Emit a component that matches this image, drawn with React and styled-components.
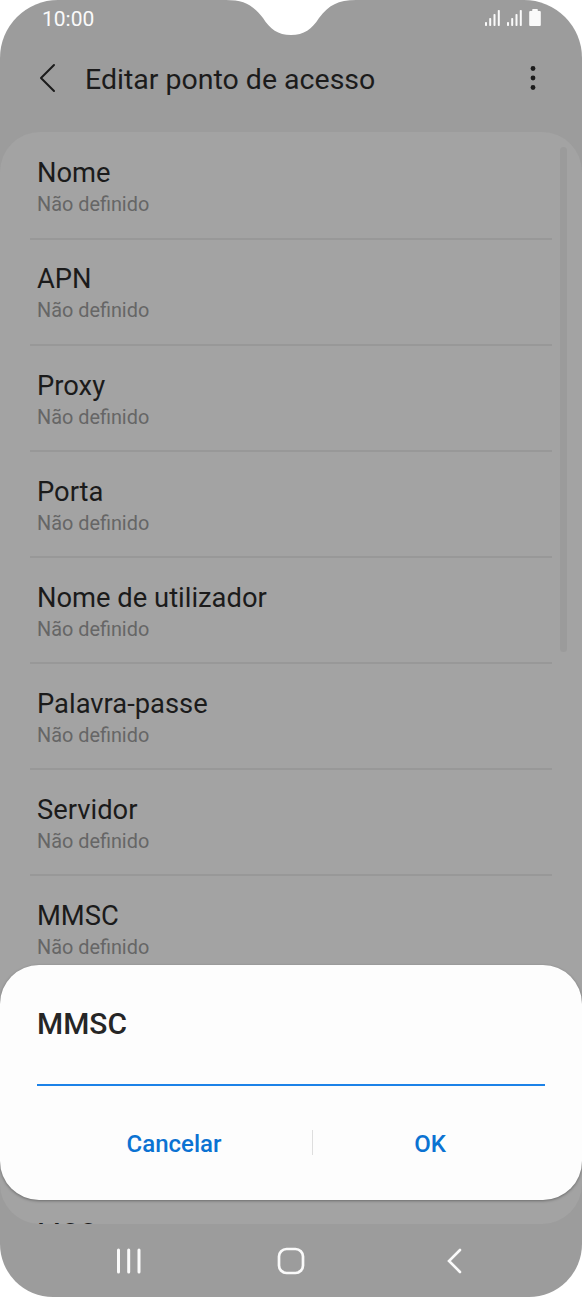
import React from 'react';
import styled, { createGlobalStyle } from 'styled-components';

const GlobalStyle = createGlobalStyle`
    * {
        box-sizing: border-box;
    }
    body {
        margin: 0;
        background: #fff;
        font-family: Roboto, "Liberation Sans", sans-serif;
    }
`;

const Phone = styled.div`
    position: relative;
    display: flex;
    flex-direction: column;
    width: 582px;
    height: 1297px;
    overflow: hidden;
    background: #9c9c9c;
    border-radius: 58px 58px 53px 53px;
`;

const Notch = styled.svg`
    position: absolute;
    top: 0;
    left: 226px;
`;

const StatusBar = styled.div`
    display: flex;
    flex: none;
    justify-content: space-between;
    height: 36px;
    padding: 0 41px 0 42px;
    color: #fafafa;
`;

const Clock = styled.span`
    font-size: 21px;
    line-height: 38px;
`;

const StatusIcons = styled.div`
    display: flex;
    gap: 7px;
    padding-top: 9px;
`;

const Header = styled.header`
    display: flex;
    flex: none;
    align-items: center;
    height: 96px;
    padding: 0 44px 12px 38px;
`;

const Title = styled.h1`
    flex: 1;
    margin: 3px 0 0 29px;
    font-size: 28.5px;
    font-weight: 400;
    line-height: 36px;
    color: #1b1b1b;
    white-space: nowrap;
`;

const Panel = styled.main`
    display: flex;
    flex: none;
    justify-content: space-between;
    height: 1092px;
    padding: 0 15px 0 30px;
    overflow: hidden;
    background: #a3a3a3;
    border-radius: 40px;
`;

const List = styled.ul`
    width: 522px;
    margin: 1.8px 0 0;
    padding: 0;
    list-style: none;
`;

const Item = styled.li`
    height: 106.07px;
    margin-top: ${props => props.$gap || 0}px;
    padding: 21.6px 7px 0;
    border-bottom: 2px solid #989898;
`;

const Label = styled.div`
    font-size: 27.35px;
    line-height: 37px;
    color: #1b1b1b;
`;

const Value = styled.div`
    font-size: 19.85px;
    line-height: 26px;
    color: #666;
`;

const ScrollThumb = styled.div`
    width: 7px;
    height: 505px;
    margin-top: 15px;
    border-radius: 4px;
    background: #9b9b9b;
`;

const NavBar = styled.nav`
    display: flex;
    flex: 1;
    align-items: center;
    justify-content: space-between;
    padding: 1px 119px 0 116px;
`;

const HomeIcon = styled.svg`
    margin-right: 5px;
`;

const Dialog = styled.section`
    position: absolute;
    left: 0;
    right: 0;
    bottom: 97px;
    height: 235px;
    padding: 40px 37px 0;
    background: #fdfdfd;
    border-radius: 39px;
    box-shadow: 0 1px 3px rgba(0, 0, 0, 0.35);
`;

const DialogTitle = styled.h2`
    margin: 0;
    font-size: 29.9px;
    font-weight: 500;
    line-height: 38px;
    color: #262626;
`;

const Field = styled.input`
    display: block;
    width: 508px;
    height: 43px;
    padding: 0;
    border: 0;
    border-bottom: 2px solid #1c82e8;
    border-radius: 0;
    outline: none;
    background: none;
    font: inherit;
    font-size: 26px;
`;

const Actions = styled.div`
    display: flex;
    align-items: center;
    height: 114px;
`;

const Action = styled.button`
    flex: none;
    width: ${props => props.$width}px;
    padding: 2px 0 0;
    border: 0;
    background: none;
    font-family: inherit;
    font-size: 24px;
    font-weight: 500;
    line-height: 30px;
    color: #0b72d2;
`;

const Separator = styled.div`
    flex: none;
    width: 1px;
    height: 25px;
    margin: 0 0 2px 1px;
    background: #dedede;
`;

const fields = [
    'Nome',
    'APN',
    'Proxy',
    'Porta',
    'Nome de utilizador',
    'Palavra-passe',
    'Servidor',
    'MMSC',
];

const Signal = () => (
    <svg width="15" height="17" viewBox="0 0 15 17" fill="#fafafa">
        <rect x="0" y="13" width="2" height="4" rx=".8" />
        <rect x="4.200" y="9" width="2" height="8" rx=".8" />
        <rect x="8.500" y="5" width="2" height="12" rx=".8" />
        <rect x="12.800" y="1" width="2" height="16" rx=".8" />
    </svg>
);

const Battery = () => (
    <svg width="12" height="17" viewBox="0 0 12 17" fill="#fafafa">
        <path d="M4 0H8q.8 0 .8.8V2h2q1 0 1 1v13q0 1-1 1H1.200q-1 0-1-1V3q0-1 1-1h2V.8Q3.200 0 4 0Z" />
    </svg>
);

const App = () => (
    <>
        <GlobalStyle />
        <Phone>
            <Notch width="130" height="36" viewBox="0 0 130 36">
                <path d="M0 0C18 0 27 5 37 18C44 29 52 35 65 35C78 35 86 29 93 18C103 5 112 0 130 0Z" fill="#fff" />
            </Notch>
            <StatusBar>
                <Clock>10:00</Clock>
                <StatusIcons>
                    <Signal />
                    <Signal />
                    <Battery />
                </StatusIcons>
            </StatusBar>
            <Header>
                <svg width="18" height="30" viewBox="0 0 18 30" fill="none" stroke="#1b1b1b" strokeWidth="2" strokeLinecap="round" strokeLinejoin="round">
                    <path d="M16 2L3 15L16 28" />
                </svg>
                <Title>Editar ponto de acesso</Title>
                <svg width="10" height="26" viewBox="0 0 10 26" fill="#1b1b1b">
                    <circle cx="5" cy="3.500" r="2.400" />
                    <circle cx="5" cy="13" r="2.400" />
                    <circle cx="5" cy="22.500" r="2.400" />
                </svg>
            </Header>
            <Panel>
                <List>
                    {fields.map(name => (
                        <Item key={name}>
                            <Label>{name}</Label>
                            <Value>Não definido</Value>
                        </Item>
                    ))}
                    <Item $gap={212}>
                        <Label>MCC</Label>
                    </Item>
                </List>
                <ScrollThumb />
            </Panel>
            <NavBar>
                <svg width="25" height="26" viewBox="0 0 25 26" stroke="#fafafa" strokeWidth="3" strokeLinecap="round">
                    <path d="M2.500 2V24M12.700 2V24M23 2V24" />
                </svg>
                <HomeIcon width="28" height="28" viewBox="0 0 28 28" fill="none" stroke="#fafafa" strokeWidth="2.700">
                    <rect x="2" y="2" width="24" height="24" rx="7.500" />
                </HomeIcon>
                <svg width="17" height="26" viewBox="0 0 17 26" fill="none" stroke="#fafafa" strokeWidth="2.600" strokeLinecap="round">
                    <path d="M14 2L3 13L14 24" />
                </svg>
            </NavBar>
            <Dialog>
                <DialogTitle>MMSC</DialogTitle>
                <Field type="text" />
                <Actions>
                    <Action $width={274}>Cancelar</Action>
                    <Separator />
                    <Action $width={234}>OK</Action>
                </Actions>
            </Dialog>
        </Phone>
    </>
);

export default App;
